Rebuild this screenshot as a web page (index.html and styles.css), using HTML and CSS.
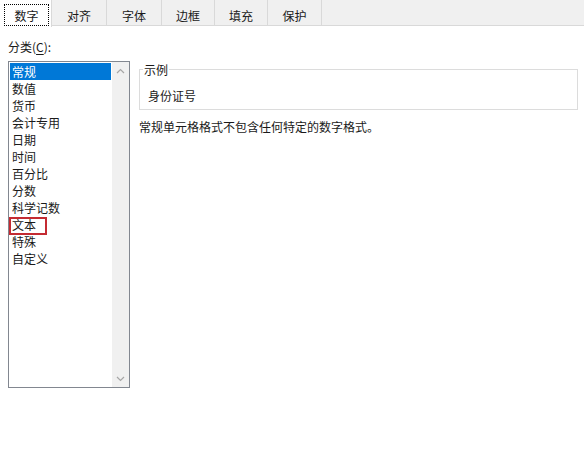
FILE: index.html
```html
<!DOCTYPE html>
<html lang="zh-CN">
<head>
<meta charset="utf-8">
<title>设置单元格格式</title>
<link rel="stylesheet" href="styles.css">
</head>
<body>
<div class="tabs">
  <div class="tab active w52"><span class="focus">数字</span></div>
  <div class="tab w55">对齐</div>
  <div class="tab w55">字体</div>
  <div class="tab w53">边框</div>
  <div class="tab w53">填充</div>
  <div class="tab w54">保护</div>
</div>
<div class="content">
  <div class="label">分类(<u>C</u>):</div>
  <div class="row">
    <div class="listbox">
      <div class="items">
        <div class="item selected">常规</div>
        <div class="item">数值</div>
        <div class="item">货币</div>
        <div class="item">会计专用</div>
        <div class="item">日期</div>
        <div class="item">时间</div>
        <div class="item">百分比</div>
        <div class="item">分数</div>
        <div class="item">科学记数</div>
        <div class="item marked">文本</div>
        <div class="item">特殊</div>
        <div class="item">自定义</div>
      </div>
      <div class="scrollbar">
        <div class="sbtn"><svg width="9" height="6" viewBox="0 0 9 6"><path d="M1 5 L4.5 1.5 L8 5" fill="none" stroke="#a6a6a6" stroke-width="1.2"/></svg></div>
        <div class="sbtn"><svg width="9" height="6" viewBox="0 0 9 6"><path d="M1 1 L4.5 4.5 L8 1" fill="none" stroke="#a6a6a6" stroke-width="1.2"/></svg></div>
      </div>
    </div>
    <div class="right">
      <fieldset class="group">
        <legend class="legend">示例</legend>
        <div class="sample">身份证号</div>
      </fieldset>
      <div class="desc">常规单元格格式不包含任何特定的数字格式。</div>
    </div>
  </div>
</div>
</body>
</html>
```
FILE: styles.css
```css
html, body {
  margin: 0;
  padding: 0;
  background: #ffffff;
}
body {
  font-family: "Noto Sans CJK SC", "Noto Sans", "Liberation Sans", sans-serif;
  font-size: 12px;
  line-height: 17px;
  color: #1a1a1a;
  width: 584px;
  height: 454px;
  overflow: hidden;
}
.tabs {
  display: flex;
  align-items: flex-start;
  height: 25px;
  background: #f0f0f0;
  border-bottom: 1px solid #d9d9d9;
}
.tab {
  box-sizing: border-box;
  height: 25px;
  padding-top: 5px;
  display: flex;
  align-items: center;
  justify-content: center;
  border-right: 1px solid #d9d9d9;
}
.w52 { width: 52px; }
.w53 { width: 53px; }
.w54 { width: 54px; }
.w55 { width: 55px; }
.tab.active {
  height: 27px;
  background: #ffffff;
  padding: 4px 2px 1px 4px;
  align-items: stretch;
  justify-content: stretch;
}
.focus {
  flex: 1;
  display: flex;
  align-items: center;
  justify-content: center;
  border: 1px dotted #000000;
}
.content {
  padding-left: 8px;
  padding-right: 6px;
}
.label {
  margin-top: 12px;
}
.label u {
  text-decoration-thickness: 1px;
  text-underline-offset: 2px;
}
.row {
  display: flex;
  margin-top: 6px;
  gap: 9px;
}
.listbox {
  width: 122px;
  height: 327px;
  box-sizing: border-box;
  border: 1px solid #828790;
  display: flex;
}
.items {
  flex: 1;
  padding: 1px;
}
.item {
  position: relative;
  height: 17px;
  padding-left: 2px;
}
.item.selected {
  background: #0078d7;
  color: #ffffff;
}
.item.marked::after {
  content: "";
  position: absolute;
  left: -1px;
  top: 1px;
  width: 38px;
  height: 18px;
  box-sizing: border-box;
  border: 2px solid #c42b32;
}
.scrollbar {
  width: 17px;
  background: #f0f0f0;
  display: flex;
  flex-direction: column;
  justify-content: space-between;
}
.sbtn {
  height: 17px;
  display: flex;
  align-items: center;
  justify-content: center;
}
.sbtn svg {
  display: block;
}
.right {
  flex: 1;
}
.group {
  margin: 0;
  padding: 0 8px 5px 8px;
  border: 1px solid #dcdcdc;
  min-width: 0;
}
.legend {
  margin-left: -5px;
  padding: 0 1px;
  line-height: 17px;
}
.sample {
  margin-top: 9px;
}
.desc {
  margin-top: 8px;
}
```
